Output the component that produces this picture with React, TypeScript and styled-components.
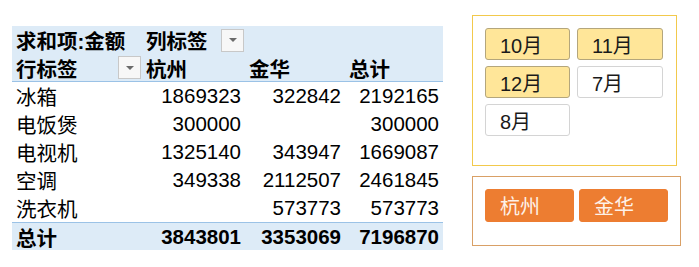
import React from 'react';
import styled, { createGlobalStyle } from 'styled-components';

const GlobalStyle = createGlobalStyle`
    body {
        margin: 0;
        background: #ffffff;
        font-family: 'Liberation Sans', 'Noto Sans CJK SC', sans-serif;
        color: #000000;
    }
`;

const Page = styled.div`
    display: flex;
    align-items: flex-start;
    gap: 29px;
    padding: 15px 0 0 12px;
`;

const Pivot = styled.div`
    display: grid;
    grid-template-columns: 130px 103px 100px 98px;
    margin-top: 11px;
    font-size: 20.5px;
`;

const Cell = styled.div<{ $band?: boolean; $bold?: boolean; $num?: boolean; $line?: 'top' | 'bottom'; $span?: number }>`
    height: 28px;
    box-sizing: border-box;
    display: flex;
    align-items: center;
    justify-content: ${(p) => (p.$num ? 'flex-end' : 'space-between')};
    padding: 0 4px;
    background: ${(p) => (p.$band ? '#ddebf7' : 'transparent')};
    font-weight: ${(p) => (p.$bold ? 700 : 400)};
    white-space: nowrap;
    grid-column: ${(p) => (p.$span ? `span ${p.$span}` : 'auto')};
    border-top: ${(p) => (p.$line === 'top' ? '1px solid #9bc2e6' : 'none')};
    border-bottom: ${(p) => (p.$line === 'bottom' ? '1px solid #9bc2e6' : 'none')};
`;

const Drop = styled.span`
    width: 23px;
    height: 23px;
    box-sizing: border-box;
    border: 1px solid #c8c8c8;
    background: #f7f7f7;
    display: flex;
    align-items: center;
    justify-content: center;
    margin-right: -3px;

    &::after {
        content: '';
        border-left: 4px solid transparent;
        border-right: 4px solid transparent;
        border-top: 4px solid #6a6a6a;
    }
`;

const Slicers = styled.div`
    display: flex;
    flex-direction: column;
    gap: 10px;
`;

const Slicer = styled.div<{ $border: string; $w: number; $h: number }>`
    box-sizing: border-box;
    width: ${(p) => p.$w}px;
    height: ${(p) => p.$h}px;
    border: 1px solid ${(p) => p.$border};
    padding: 12px 12px;
`;

const Grid = styled.div<{ $cols: string; $gap: string }>`
    display: grid;
    grid-template-columns: ${(p) => p.$cols};
    gap: ${(p) => p.$gap};
`;

const Item = styled.div<{ $kind: 'on' | 'off' | 'orange'; $h: number }>`
    box-sizing: border-box;
    height: ${(p) => p.$h}px;
    border-radius: 3px;
    display: flex;
    align-items: center;
    padding-left: 14px;
    font-size: 20px;
    border: 1px solid
        ${(p) => (p.$kind === 'on' ? '#b4a67c' : p.$kind === 'off' ? '#d4d4d4' : '#ed7d31')};
    background: ${(p) => (p.$kind === 'on' ? '#ffe699' : p.$kind === 'off' ? '#ffffff' : '#ed7d31')};
    color: ${(p) => (p.$kind === 'orange' ? '#fdf1e8' : '#1a1a1a')};
`;

const rows: [string, string, string, string][] = [
    ['冰箱', '1869323', '322842', '2192165'],
    ['电饭煲', '300000', '', '300000'],
    ['电视机', '1325140', '343947', '1669087'],
    ['空调', '349338', '2112507', '2461845'],
    ['洗衣机', '', '573773', '573773'],
];

const months: [string, boolean][] = [
    ['10月', true],
    ['11月', true],
    ['12月', true],
    ['7月', false],
    ['8月', false],
];

const App: React.FC = () => {
    return (
        <>
            <GlobalStyle />
            <Page>
                <Pivot>
                    <Cell $band $bold>求和项:金额</Cell>
                    <Cell $band $bold>
                        列标签
                        <Drop />
                    </Cell>
                    <Cell $band $span={2} />

                    <Cell $band $bold $line='bottom'>
                        行标签
                        <Drop />
                    </Cell>
                    <Cell $band $bold $line='bottom'>杭州</Cell>
                    <Cell $band $bold $line='bottom'>金华</Cell>
                    <Cell $band $bold $line='bottom'>总计</Cell>

                    {rows.map((r) => (
                        <React.Fragment key={r[0]}>
                            <Cell>{r[0]}</Cell>
                            <Cell $num>{r[1]}</Cell>
                            <Cell $num>{r[2]}</Cell>
                            <Cell $num>{r[3]}</Cell>
                        </React.Fragment>
                    ))}

                    <Cell $band $bold $line='top'>总计</Cell>
                    <Cell $band $bold $num $line='top'>3843801</Cell>
                    <Cell $band $bold $num $line='top'>3353069</Cell>
                    <Cell $band $bold $num $line='top'>7196870</Cell>
                </Pivot>

                <Slicers>
                    <Slicer $border='#f2c94c' $w={205} $h={151}>
                        <Grid $cols='85px 86px' $gap='6px 7px'>
                            {months.map(([m, on]) => (
                                <Item key={m} $kind={on ? 'on' : 'off'} $h={32}>
                                    {m}
                                </Item>
                            ))}
                        </Grid>
                    </Slicer>
                    <Slicer $border='#d9a066' $w={209} $h={70}>
                        <Grid $cols='89px 89px' $gap='5px'>
                            <Item $kind='orange' $h={33}>杭州</Item>
                            <Item $kind='orange' $h={33}>金华</Item>
                        </Grid>
                    </Slicer>
                </Slicers>
            </Page>
        </>
    );
};

export default App;
